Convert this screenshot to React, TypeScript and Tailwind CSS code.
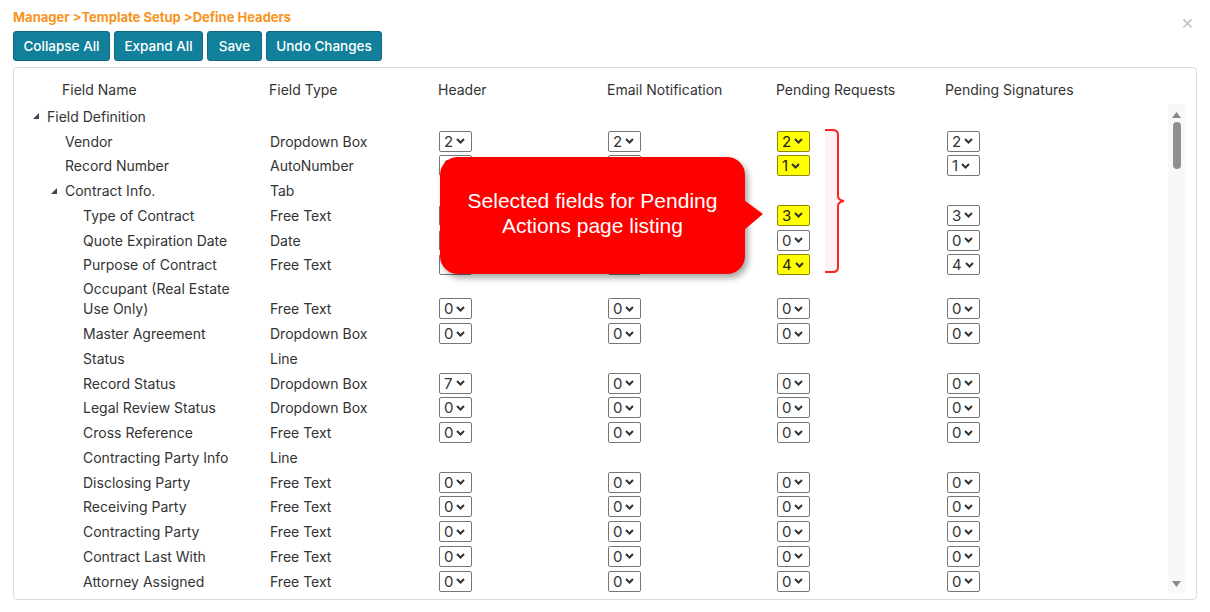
import React from "react";

type Row = {
  name: string;
  level: number;
  expander?: boolean;
  type?: string;
  values?: (string | null)[];
  hl?: boolean;
  tall?: boolean;
};

const rows: Row[] = [
  { name: "Field Definition", level: 0, expander: true },
  { name: "Vendor", level: 1, type: "Dropdown Box", values: ["2", "2", "2", "2"], hl: true },
  { name: "Record Number", level: 1, type: "AutoNumber", values: ["1", "1", "1", "1"], hl: true },
  { name: "Contract Info.", level: 1, expander: true, type: "Tab" },
  { name: "Type of Contract", level: 2, type: "Free Text", values: ["3", "3", "3", "3"], hl: true },
  { name: "Quote Expiration Date", level: 2, type: "Date", values: ["0", "0", "0", "0"] },
  { name: "Purpose of Contract", level: 2, type: "Free Text", values: ["4", "4", "4", "4"], hl: true },
  { name: "Occupant (Real Estate", level: 2, type: "Free Text", values: ["0", "0", "0", "0"], tall: true },
  { name: "Master Agreement", level: 2, type: "Dropdown Box", values: ["0", "0", "0", "0"] },
  { name: "Status", level: 2, type: "Line" },
  { name: "Record Status", level: 2, type: "Dropdown Box", values: ["7", "0", "0", "0"] },
  { name: "Legal Review Status", level: 2, type: "Dropdown Box", values: ["0", "0", "0", "0"] },
  { name: "Cross Reference", level: 2, type: "Free Text", values: ["0", "0", "0", "0"] },
  { name: "Contracting Party Info", level: 2, type: "Line" },
  { name: "Disclosing Party", level: 2, type: "Free Text", values: ["0", "0", "0", "0"] },
  { name: "Receiving Party", level: 2, type: "Free Text", values: ["0", "0", "0", "0"] },
  { name: "Contracting Party", level: 2, type: "Free Text", values: ["0", "0", "0", "0"] },
  { name: "Contract Last With", level: 2, type: "Free Text", values: ["0", "0", "0", "0"] },
  { name: "Attorney Assigned", level: 2, type: "Free Text", values: ["0", "0", "0", "0"] },
];

// text start per tree level (expander triangles sit 14px left of the text)
const indent = ["pl-[33px]", "pl-[51px]", "pl-[69px]"];
const triIndent = ["pl-[19px]", "pl-[37px]", "pl-[55px]"];

const Chevron = () => (
  <svg width="9" height="6" viewBox="0 0 9 6" className="ml-[3px]">
    <path d="M1 1 L4.5 4.5 L8 1" fill="none" stroke="#333" strokeWidth="2" />
  </svg>
);

const Pick = ({ v, yellow }: { v: string; yellow?: boolean }) => (
  <span
    className={
      "flex items-center h-[21px] w-[33px] pl-[4px] border rounded-[2px] text-[15px] leading-none " +
      (yellow ? "bg-[#ffff00] border-[#8a8a00] text-[#222]" : "bg-white border-[#767676] text-[#333]")
    }
  >
    {v}
    <Chevron />
  </span>
);

const Tri = () => (
  <svg width="6" height="6" viewBox="0 0 6 6" className="mr-[8px]">
    <polygon points="6,0 6,6 0,6" fill="#444" />
  </svg>
);

const TreeRow = ({ r }: { r: Row }) => {
  const cells = (r.values ?? [null, null, null, null]).map((v, i) => (
    <div key={i} className={"flex items-center h-[24.75px] " + (i === 3 ? "flex-1 pl-[2px]" : "w-[169px] pl-[1px]")}>
      {v !== null && <Pick v={v} yellow={i === 2 && r.hl} />}
    </div>
  ));
  return (
    <div className={"flex items-end " + (r.tall ? "h-[44px]" : "h-[24.75px]")}>
      <div className="w-[255px] shrink-0">
        {r.tall ? (
          <div className={indent[r.level]}>
            <div className="h-[19px] leading-[19px]">{r.name}</div>
            <div className="h-[24.75px] flex items-center -mt-[1px]">Use Only)</div>
          </div>
        ) : (
          <div className={"flex items-center h-[24.75px] " + (r.expander ? triIndent[r.level] : indent[r.level])}>
            {r.expander && <Tri />}
            {r.name}
          </div>
        )}
      </div>
      <div className="w-[169px] shrink-0 h-[24.75px] flex items-center pl-[1px]">{r.type}</div>
      {cells}
    </div>
  );
};

const buttons = [
  { label: "Collapse All", w: "w-[97px]" },
  { label: "Expand All", w: "w-[89px]" },
  { label: "Save", w: "w-[55px]" },
  { label: "Undo Changes", w: "w-[116px]" },
];

export default function App() {
  return (
    <div className="relative w-[1210px] h-[612px] bg-white px-[13px] text-[14px] text-[#333] font-['Inter','Liberation_Sans',sans-serif] overflow-hidden">
      <div className="pt-[10px] h-[31px] text-[13px] font-bold text-[#f7941d] leading-[15px]">
        Manager &gt;Template Setup &gt;Define Headers
      </div>
      <span className="absolute right-[16px] top-[12px] text-[20px] text-[#c4c4c4] leading-none">×</span>
      <div className="flex gap-[4px]">
        {buttons.map((b) => (
          <button
            key={b.label}
            className={"h-[30px] rounded-[3px] bg-[#12809b] border border-[#0d6c84] text-white text-[13.5px] font-medium " + b.w}
          >
            {b.label}
          </button>
        ))}
      </div>
      <div className="mt-[6px] h-[533px] border border-[#dcdcdc] rounded-[4px] flex flex-col">
        <div className="flex h-[36px] pt-[6px] items-center shrink-0">
          <div className="w-[255px] pl-[48px]">Field Name</div>
          <div className="w-[169px]">Field Type</div>
          <div className="w-[169px]">Header</div>
          <div className="w-[169px]">Email Notification</div>
          <div className="w-[169px]">Pending Requests</div>
          <div className="flex-1">Pending Signatures</div>
        </div>
        <div className="flex flex-1 overflow-hidden">
          <div className="flex-1">
            {rows.map((r) => (
              <TreeRow key={r.name} r={r} />
            ))}
          </div>
          <div className="w-[17px] mr-[11px] mb-[6px] bg-[#f8f8f8] flex flex-col items-center">
            <svg width="9" height="6" viewBox="0 0 9 6" className="mt-[8px]">
              <polygon points="4.5,0 9,6 0,6" fill="#8a8a8a" />
            </svg>
            <div className="mt-[4px] w-[8px] h-[47px] rounded-full bg-[#8f8f8f]" />
            <div className="flex-1" />
            <svg width="9" height="6" viewBox="0 0 9 6" className="mb-[6px]">
              <polygon points="0,0 9,0 4.5,6" fill="#8a8a8a" />
            </svg>
          </div>
        </div>
      </div>

      {/* callout */}
      <div className="absolute left-[440px] top-[157px] w-[305px] h-[117px] rounded-[18px] bg-[#ff0000] shadow-[3px_4px_6px_rgba(0,0,0,0.35)] flex items-center justify-center text-center text-white text-[21px] leading-[25px] font-['Liberation_Sans',Arial,sans-serif]">
        <span className="-mt-[5px]">
          Selected fields for Pending
          <br />
          Actions page listing
        </span>
      </div>
      <svg className="absolute left-[744px] top-[198px]" width="20" height="34" viewBox="0 0 20 34">
        <polygon points="0,2 19,16 0,32" fill="#ff0000" />
      </svg>

      {/* bracket */}
      <svg className="absolute left-[824px] top-[128px]" width="24" height="146" viewBox="0 0 24 146">
        <path d="M1 2 H9 Q14 2 14 7 V68 Q14 72 20 73 Q14 74 14 78 V139 Q14 144 9 144 H1 Z" fill="#fff3f3" stroke="none" />
        <path d="M1 2 H9 Q14 2 14 7 V68 Q14 72 20 73 Q14 74 14 78 V139 Q14 144 9 144 H1" fill="none" stroke="#ff2222" strokeWidth="2" />
      </svg>
    </div>
  );
}
